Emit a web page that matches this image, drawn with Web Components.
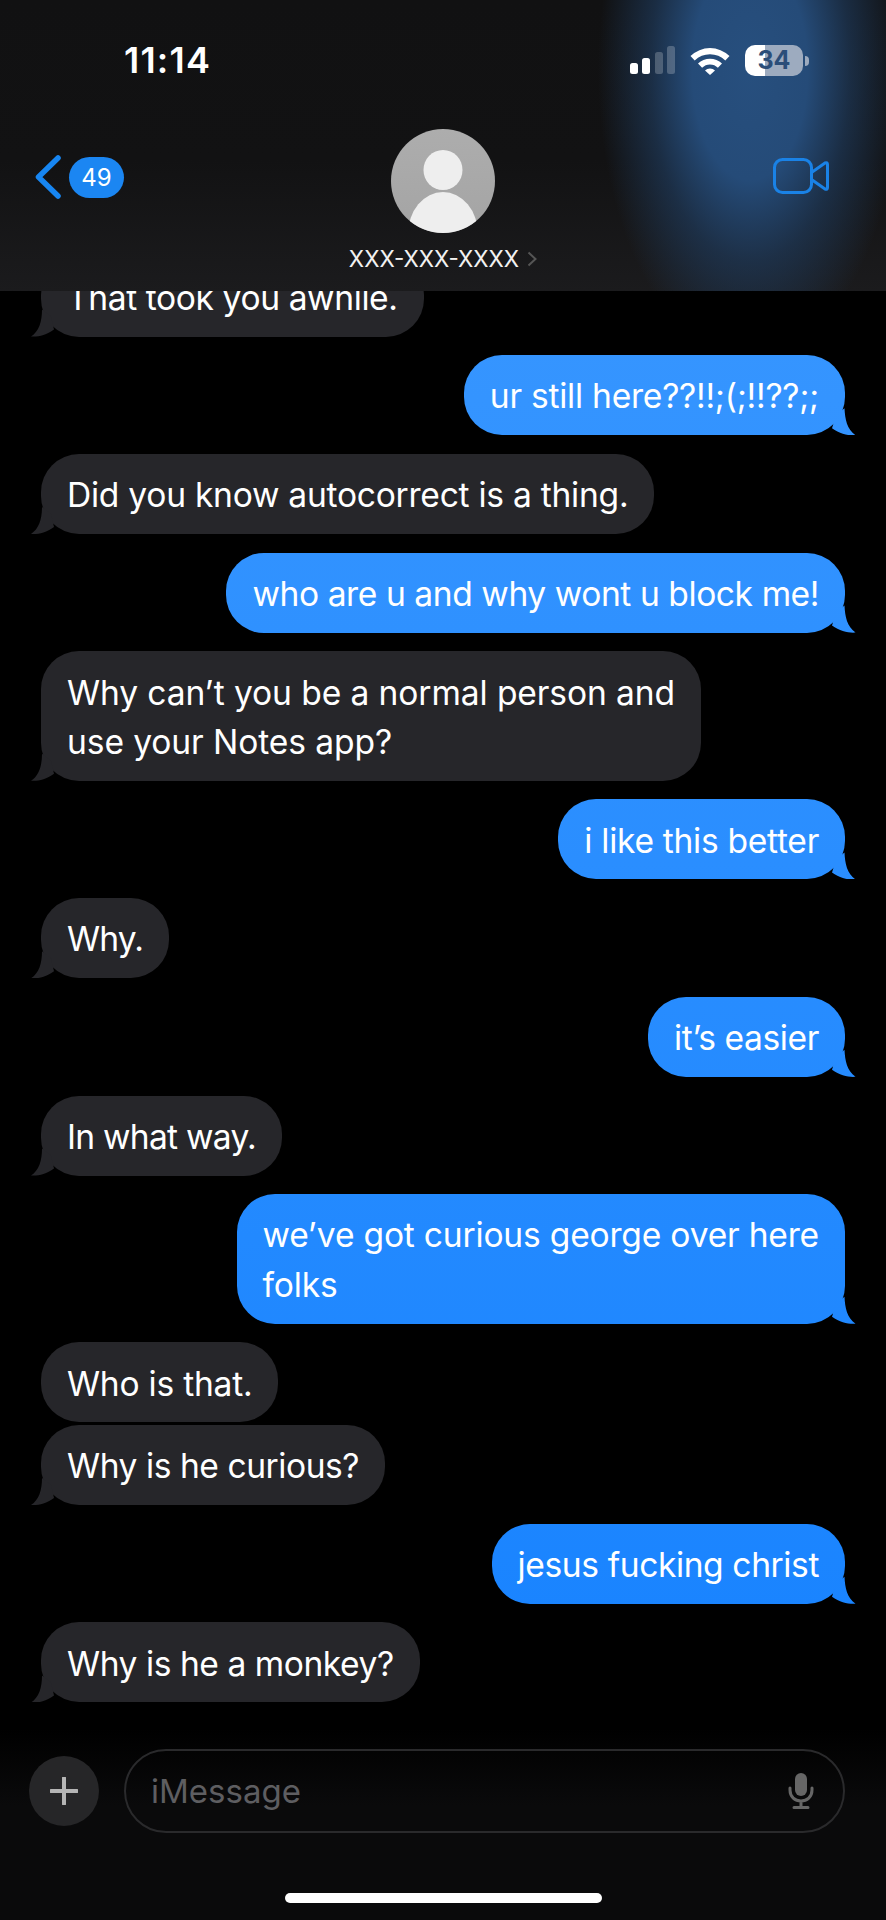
<!DOCTYPE html>
<html lang="en">
<head>
<meta charset="utf-8">
<title>Messages</title>
<style>
  html, body { margin: 0; background: #000; }
</style>
</head>
<body>
<imsg-app>
  <imsg-header slot="header" time="11:14" badge="49" contact="XXX-XXX-XXXX" battery="34"></imsg-header>
  <imsg-bubble from="them" tail>That took you awhile.</imsg-bubble>
  <imsg-bubble from="me" tail style="--track:-.25px">ur still here??!!;(;!!??;;</imsg-bubble>
  <imsg-bubble from="them" tail style="--track:-.26px">Did you know autocorrect is a thing.</imsg-bubble>
  <imsg-bubble from="me" tail style="--track:-.43px">who are u and why wont u block me!</imsg-bubble>
  <imsg-bubble from="them" tail style="--track:-.1px">Why can’t you be a normal person and<br>use your Notes app?</imsg-bubble>
  <imsg-bubble from="me" tail style="--track:-.29px">i like this better</imsg-bubble>
  <imsg-bubble from="them" tail style="--track:-.9px">Why.</imsg-bubble>
  <imsg-bubble from="me" tail>it’s easier</imsg-bubble>
  <imsg-bubble from="them" tail style="--track:-.73px">In what way.</imsg-bubble>
  <imsg-bubble from="me" tail style="--track:-.2px">we’ve got curious george over here<br>folks</imsg-bubble>
  <imsg-bubble from="them" grouped style="--track:-.23px">Who is that.</imsg-bubble>
  <imsg-bubble from="them" tail style="--track:-.45px">Why is he curious?</imsg-bubble>
  <imsg-bubble from="me" tail>jesus fucking christ</imsg-bubble>
  <imsg-bubble from="them" tail style="--track:-.45px">Why is he a monkey?</imsg-bubble>
  <imsg-composer slot="composer" placeholder="iMessage"></imsg-composer>
</imsg-app>

<script>
(function() {
  const FONT = 'Inter, "Liberation Sans", sans-serif';

  class ImsgApp extends HTMLElement {
    constructor() {
      super();
      this.attachShadow({ mode: 'open' });
      this.shadowRoot.innerHTML = `
        <style>
          :host {
            display: flex;
            flex-direction: column;
            position: relative;
            width: 886px;
            height: 1920px;
            overflow: hidden;
            background: #000;
            font-family: ${FONT};
          }
          .thread {
            flex: 1;
            display: flex;
            flex-direction: column;
            padding-top: 256.5px;
            gap: 18.7px;
          }
          .top {
            position: absolute;
            top: 0;
            left: 0;
            right: 0;
          }
        </style>
        <div class="thread"><slot></slot></div>
        <slot name="composer"></slot>
        <div class="top"><slot name="header"></slot></div>
      `;
    }
  }

  class ImsgHeader extends HTMLElement {
    constructor() {
      super();
      this.attachShadow({ mode: 'open' });
    }

    connectedCallback() {
      const time = this.getAttribute('time');
      const badge = this.getAttribute('badge');
      const contact = this.getAttribute('contact');
      const battery = this.getAttribute('battery');
      this.shadowRoot.innerHTML = `
        <style>
          :host {
            display: block;
            height: 291px;
            color: #fff;
            background:
              radial-gradient(ellipse 152px 290px at 750px 70px, #274f7e 0, #254b78 38%, rgba(32,62,98,.62) 66%, rgba(20,20,20,0) 100%),
              linear-gradient(#111112, #121213 55%, #1b1b1d);
          }
          .status {
            display: flex;
            align-items: center;
            justify-content: space-between;
            height: 30px;
            padding: 45px 83px 0 124px;
          }
          .time {
            font-size: 36px;
            font-weight: 600;
            letter-spacing: 1.2px;
            line-height: 30px;
          }
          .icons {
            display: flex;
            align-items: center;
            gap: 15px;
          }
          .battery {
            position: relative;
            width: 58px;
            height: 31px;
            border-radius: 10px;
            background: linear-gradient(90deg, #fff 34%, #9dabbf 34%);
            color: #2b4e79;
            font-size: 25px;
            font-weight: 700;
            line-height: 31px;
            text-align: center;
          }
          .battery::after {
            content: "";
            position: absolute;
            right: -6px;
            top: 11px;
            width: 4px;
            height: 10px;
            border-radius: 0 4px 4px 0;
            background: #9dabbf;
          }
          .nav {
            display: grid;
            grid-template-columns: 1fr auto 1fr;
            padding-top: 54px;
          }
          .back {
            display: flex;
            align-items: center;
            gap: 8px;
            height: 42px;
            margin: 27px 0 0 35px;
          }
          .badge {
            width: 55px;
            height: 41px;
            border-radius: 21px;
            background: #1b86f2;
            font-size: 24px;
            line-height: 41px;
            text-align: center;
          }
          .who {
            display: flex;
            flex-direction: column;
            align-items: center;
          }
          .name {
            display: flex;
            align-items: center;
            gap: 8px;
            margin-top: 12px;
            font-size: 22.4px;
            line-height: 28px;
            color: #f2f2f2;
          }
          .video {
            justify-self: end;
            margin: 29px 57px 0 0;
          }
          svg { display: block; }
        </style>
        <div class="status">
          <span class="time">${time}</span>
          <div class="icons">
            <svg width="45" height="28" viewBox="0 0 45 28">
              <rect x="0" y="17" width="8" height="11" rx="2.5" fill="#fff"/>
              <rect x="12" y="12" width="8" height="16" rx="2.5" fill="#fff"/>
              <rect x="25" y="6" width="8" height="22" rx="2.5" fill="#fff" fill-opacity=".22"/>
              <rect x="37" y="0" width="8" height="28" rx="2.5" fill="#fff" fill-opacity=".22"/>
            </svg>
            <svg width="40" height="29" viewBox="0 0 40 29">
              <path d="M.5 10 A28 28 0 0 1 39.5 10 L35.3 14.4 A22 22 0 0 0 4.7 14.4Z" fill="#fff"/>
              <path d="M8 17.6 A17 17 0 0 1 32 17.6 L27.9 21.8 A11 11 0 0 0 12.1 21.8Z" fill="#fff"/>
              <path d="M15 24.6 A7 7 0 0 1 25 24.6 L20 29Z" fill="#fff"/>
            </svg>
            <span class="battery">${battery}</span>
          </div>
        </div>
        <div class="nav">
          <div class="back">
            <svg width="26" height="44" viewBox="0 0 26 44">
              <path d="M23 3 L3.5 22 L23 41" fill="none" stroke="#1786f2" stroke-width="5.5" stroke-linecap="round" stroke-linejoin="round"/>
            </svg>
            <span class="badge">${badge}</span>
          </div>
          <div class="who">
            <svg width="104" height="104" viewBox="0 0 104 104">
              <defs>
                <linearGradient id="av" x1="0" y1="0" x2="0" y2="1">
                  <stop offset="0" stop-color="#adadad"/>
                  <stop offset="1" stop-color="#a4a4a4"/>
                </linearGradient>
                <clipPath id="avc"><circle cx="52" cy="52" r="52"/></clipPath>
              </defs>
              <circle cx="52" cy="52" r="52" fill="url(#av)"/>
              <g clip-path="url(#avc)" fill="#eeeeee">
                <ellipse cx="52" cy="41" rx="19.5" ry="20"/>
                <ellipse cx="52" cy="105" rx="35" ry="42"/>
              </g>
            </svg>
            <div class="name">
              <span>${contact}</span>
              <svg width="10" height="16" viewBox="0 0 10 16">
                <path d="M1.5 1.5 L8.5 8 L1.5 14.5" fill="none" stroke="#555" stroke-width="2"/>
              </svg>
            </div>
          </div>
          <svg class="video" width="56" height="36" viewBox="0 0 56 36">
            <rect x="1.5" y="1.5" width="37" height="33" rx="8" fill="none" stroke="#1a82e6" stroke-width="3"/>
            <path d="M38.5 14.5 L52 5 Q54.5 4 54.5 6.5 V29.5 Q54.5 32 52 31 L38.5 21.5" fill="none" stroke="#1a82e6" stroke-width="3" stroke-linejoin="round"/>
          </svg>
        </div>
      `;
    }
  }

  const bubbleTemplate = document.createElement('template');
  bubbleTemplate.innerHTML = `
    <style>
      :host {
        display: flex;
        justify-content: flex-start;
        padding: 0 41px;
        color: #fff;
      }
      :host([from="me"]) {
        justify-content: flex-end;
      }
      :host([grouped]) {
        margin-bottom: -16px;
      }
      .bubble {
        position: relative;
        padding: 15.25px 26px;
        border-radius: 38px;
        background: #26262a;
        font-size: 33.6px;
        line-height: 49.5px;
        letter-spacing: var(--track, -.4px);
        white-space: nowrap;
      }
      .text {
        position: relative;
        top: 1px;
      }
      :host([from="me"]) .bubble {
        background: linear-gradient(#3c9aff 0, #3494ff 400px, #1883ff 1700px) fixed;
      }
      .tail {
        display: none;
        position: absolute;
        bottom: 0;
        left: -10px;
        width: 30px;
        height: 30px;
        background: #26262a;
        clip-path: path("M20 10 L11 3 C11 15 8 25 0 30 C7 30.5 15 29 23 23 Z");
      }
      :host([tail]) .tail {
        display: block;
      }
      :host([from="me"]) .tail {
        left: auto;
        right: -11px;
        background: linear-gradient(#3c9aff 0, #3494ff 400px, #1883ff 1700px) fixed;
        clip-path: path("M10 10 L18.5 3 C19 14 21 24 29.5 30 C23 30.5 14 29 6 23 Z");
      }
    </style>
    <div class="bubble"><span class="text"><slot></slot></span><span class="tail"></span></div>
  `;

  class ImsgBubble extends HTMLElement {
    constructor() {
      super();
      this.attachShadow({ mode: 'open' });
      this.shadowRoot.appendChild(bubbleTemplate.content.cloneNode(true));
    }
  }

  class ImsgComposer extends HTMLElement {
    constructor() {
      super();
      this.attachShadow({ mode: 'open' });
    }

    connectedCallback() {
      this.shadowRoot.innerHTML = `
        <style>
          :host {
            display: block;
            height: 191px;
            padding-top: 20px;
            box-sizing: border-box;
            background: linear-gradient(#000, #0a0a0b 40%);
          }
          .row {
            display: flex;
            align-items: center;
            gap: 25px;
            padding: 0 41px 0 29px;
          }
          .plus {
            flex: none;
            display: flex;
            align-items: center;
            justify-content: center;
            width: 70px;
            height: 70px;
            border-radius: 50%;
            background: #262628;
          }
          .field {
            flex: 1;
            display: flex;
            align-items: center;
            justify-content: space-between;
            height: 84px;
            padding: 0 29px 0 25px;
            box-sizing: border-box;
            border: 2px solid #2a2a2c;
            border-radius: 42px;
            color: #5e5e61;
            font-size: 33px;
          }
          .home {
            width: 317px;
            height: 10px;
            margin: 60px auto 0;
            border-radius: 5px;
            background: #fff;
          }
          svg { display: block; }
        </style>
        <div class="row">
          <div class="plus">
            <svg width="28" height="28" viewBox="0 0 28 28">
              <path d="M14 1 V27 M1 14 H27" stroke="#b5b5b5" stroke-width="4" stroke-linecap="round"/>
            </svg>
          </div>
          <div class="field">
            <span>${this.getAttribute('placeholder')}</span>
            <svg width="26" height="36" viewBox="0 0 26 36">
              <rect x="7" y="0" width="12" height="23" rx="6" fill="#666"/>
              <path d="M2 15 V17 C2 24 7 28 13 28 C19 28 24 24 24 17 V15 M13 28 V34 M6 34.5 H20" fill="none" stroke="#666" stroke-width="3" stroke-linecap="round"/>
            </svg>
          </div>
        </div>
        <div class="home"></div>
      `;
    }
  }

  customElements.define('imsg-app', ImsgApp);
  customElements.define('imsg-header', ImsgHeader);
  customElements.define('imsg-bubble', ImsgBubble);
  customElements.define('imsg-composer', ImsgComposer);
})();
</script>
</body>
</html>
